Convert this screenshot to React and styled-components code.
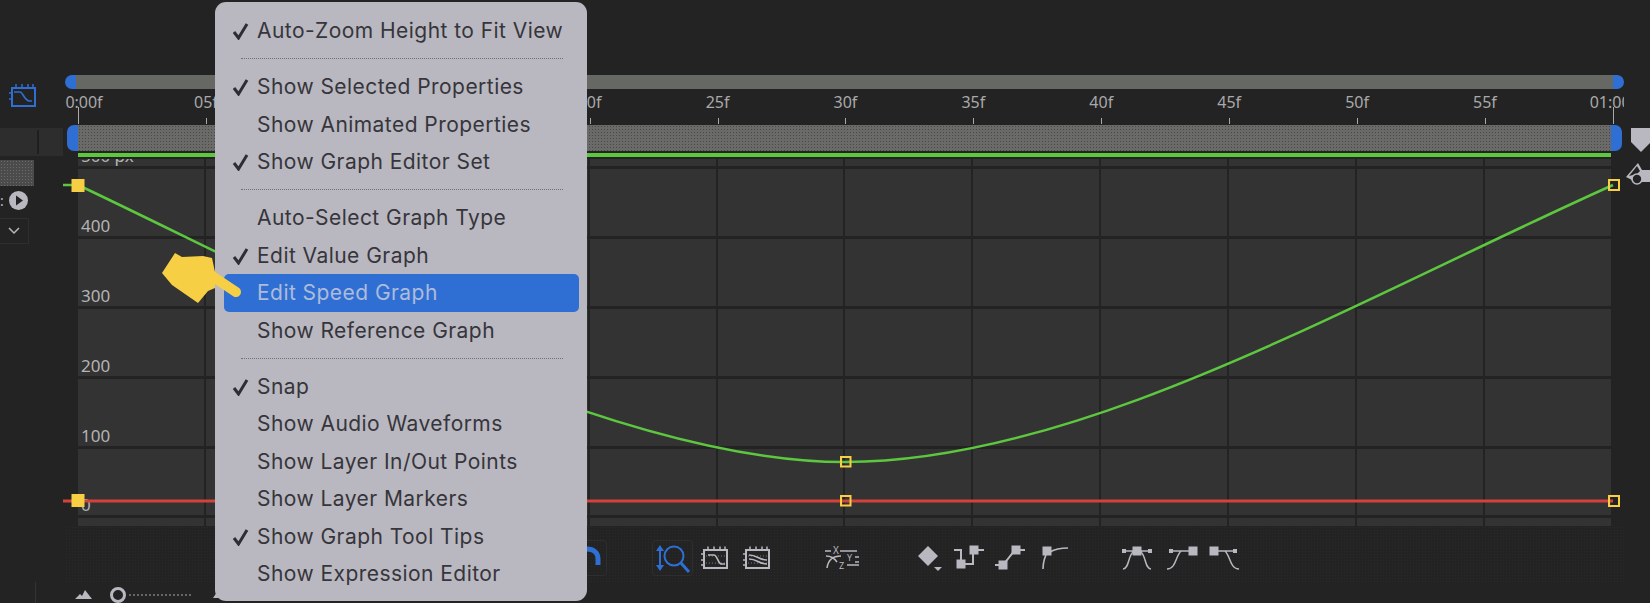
import React from 'react'
import styled, { createGlobalStyle } from 'styled-components'

const GlobalStyle = createGlobalStyle`
html, body {
    margin: 0;
    padding: 0;
    background-color: #232323;
}
`

const grey = '#b9b8c0'
const blue = '#2f6fd4'

const Page = styled.div`
position: relative;
width: 1650px;
height: 603px;
overflow: hidden;
background-color: #232323;
font-family: 'Noto Sans', sans-serif;
`
const Main = styled.div`
display: flex;
height: 582px;
`
const LeftPanel = styled.div`
flex: 0 0 65px;
display: flex;
flex-direction: column;
align-items: flex-start;
padding-top: 83px;
box-sizing: border-box;
`
const PanelIcon = styled.svg`
margin-left: 9px;
margin-bottom: 19px;
`
const LayerStrip = styled.div`
width: 63px;
height: 28px;
background-color: #2d2d2d;
background-image: linear-gradient(#1f1f1f, #1f1f1f);
background-size: 2px 24px;
background-position: 37px 2px;
background-repeat: no-repeat;
`
const NoisyBlock = styled.div`
width: 34px;
height: 26px;
margin-top: 4px;
background-color: #4b4b4b;
background-image: radial-gradient(#6b6b6b 0.7px, transparent 0.8px);
background-size: 3px 3px;
`
const PlayRow = styled.div`
display: flex;
align-items: center;
gap: 5px;
margin-top: 5px;
color: ${grey};
font-size: 14px;
line-height: 19px;
height: 19px;
`
const Dropdown = styled.div`
width: 29px;
height: 26px;
margin-top: 8px;
border: 1px solid #2e2e2e;
border-left: none;
box-sizing: border-box;
display: flex;
align-items: center;
justify-content: center;
`
const Center = styled.div`
flex: 0 0 1559px;
min-width: 0;
display: flex;
flex-direction: column;
`
const ScrollRow = styled.div`
display: flex;
height: 14px;
margin-top: 75px;
`
const Handle = styled.div`
flex: 0 0 11px;
background-color: ${blue};
border-radius: ${p => (p.$right ? '0 7px 7px 0' : '7px 0 0 7px')};
`
const ScrollTrack = styled.div`
flex: 1;
background-color: #666864;
`
const Ruler = styled.div`
display: flex;
height: 36px;
padding-left: 13px;
overflow: hidden;
`
const RulerMark = styled.div`
position: relative;
flex: 0 0 127.92px;
`
const RulerLabel = styled.span`
position: absolute;
top: 3px;
left: ${p => p.$shift}px;
transform: translateX(-50%);
font-size: 16px;
line-height: 20px;
color: #a9a9a9;
white-space: nowrap;
`
const RulerTick = styled.i`
position: absolute;
left: 0;
bottom: 1px;
width: 1px;
height: ${p => (p.$major ? 17 : 6)}px;
background-color: #a9a9a9;
`
const NavRow = styled.div`
display: flex;
height: 26px;
margin-left: 2px;
width: 1555px;
`
const NavTrack = styled.div`
flex: 1;
background-color: #6a6a68;
background-image: radial-gradient(#484848 0.7px, transparent 0.8px);
background-size: 3px 3px;
`
const GreenBar = styled.div`
height: 4px;
width: 1533px;
margin: 2px 0 2px 13px;
background-color: #5cc73f;
`
const GraphGrid = styled.div`
display: grid;
width: 1533px;
height: 367px;
margin-left: 13px;
grid-template-columns: repeat(12, 1fr);
grid-template-rows: 7px repeat(4, 67px) 66px 8px;
column-gap: 2px;
row-gap: 3px;
`
const Cell = styled.div`
background-color: #333333;
overflow: hidden;
display: flex;
align-items: flex-end;
padding-left: 3px;
font-size: 17px;
line-height: 20px;
color: #b4b4b4;
white-space: nowrap;
`
const Toolbar = styled.div`
flex: 1;
display: flex;
align-items: center;
padding: 8px 0 0 510px;
background-image: radial-gradient(#2a2a2a 0.6px, transparent 0.7px);
background-size: 3px 3px;
`
const ToolButton = styled.div`
display: flex;
align-items: center;
justify-content: center;
flex: 0 0 auto;
margin-left: ${p => p.$ml || 0}px;
width: ${p => p.$w}px;
height: 36px;
border-radius: 4px;
border: ${p => (p.$boxed ? '1px solid #2e2e2e' : 'none')};
box-sizing: border-box;
`
const Rail = styled.div`
flex: 0 0 26px;
display: flex;
flex-direction: column;
padding: 128px 0 0 2px;
box-sizing: border-box;
gap: 11px;
overflow: hidden;
`
const ShieldIcon = styled.svg`
margin-left: 5px;
`
const Footer = styled.div`
display: flex;
align-items: center;
height: 21px;
margin-left: 35px;
padding: 4px 0 0 39px;
box-sizing: border-box;
border-left: 1px solid #333;
`
const SliderKnob = styled.svg`
margin-left: 17px;
`
const SliderTrack = styled.div`
width: 62px;
margin-left: 2px;
border-top: 2px dotted #666;
`
const FooterMark = styled.svg`
margin-left: 22px;
`
const Overlay = styled.svg`
position: absolute;
top: 0;
left: 0;
pointer-events: none;
`
const Menu = styled.div`
position: absolute;
top: 2px;
left: 215px;
width: 372px;
height: 599px;
padding-top: 10px;
box-sizing: border-box;
border-radius: 11px;
background-color: ${grey};
font-family: 'Inter', sans-serif;
`
const MenuItem = styled.div`
position: relative;
display: flex;
align-items: center;
height: 37.5px;
margin: 0 8px 0 9px;
padding-left: 33px;
border-radius: 5px;
font-size: 21px;
letter-spacing: 0.45px;
white-space: nowrap;
color: ${p => (p.$active ? '#aebbd9' : '#36353b')};
background-color: ${p => (p.$active ? blue : 'transparent')};
`
const Check = styled.svg`
position: absolute;
left: 8px;
top: 10px;
`
const MenuRule = styled.div`
height: 18.5px;
display: flex;
align-items: center;
padding: 0 24px 0 26px;
&::after {
    content: '';
    flex: 1;
    border-top: 1px dotted #6f6f75;
}
`
const Hand = styled.svg`
position: absolute;
left: 160px;
top: 252px;
`

const frames = ['0:00f', '05f', '10f', '15f', '20f', '25f', '30f', '35f', '40f', '45f', '50f', '55f', '01:00f']
const rowLabels = ['500 px', '400', '300', '200', '100', '0', '']

const menuGroups = [
    [{ text: 'Auto-Zoom Height to Fit View', on: true }],
    [
        { text: 'Show Selected Properties', on: true },
        { text: 'Show Animated Properties' },
        { text: 'Show Graph Editor Set', on: true },
    ],
    [
        { text: 'Auto-Select Graph Type' },
        { text: 'Edit Value Graph', on: true },
        { text: 'Edit Speed Graph', active: true },
        { text: 'Show Reference Graph' },
    ],
    [
        { text: 'Snap', on: true },
        { text: 'Show Audio Waveforms' },
        { text: 'Show Layer In/Out Points' },
        { text: 'Show Layer Markers' },
        { text: 'Show Graph Tool Tips', on: true },
        { text: 'Show Expression Editor' },
    ],
]

function GraphGlyph({ color, w = 28, children }) {
    return (
        <svg width={w} height="26" viewBox="0 0 28 26" fill="none" stroke={color}>
            <rect x="3" y="5" width="23" height="18" strokeWidth="2" />
            <path d="M7 1.5v3M13 1.5v3M19 1.5v3M24 1.5v3M0 9h3M0 15h3M0 20h3" strokeWidth="1.5" />
            <path d="M5 11h20M5 18h20" strokeWidth="1" strokeDasharray="1 2" opacity="0.6" />
            {children}
        </svg>
    )
}

function Square({ x, y, w = 10 }) {
    return <rect x={x - w / 2} y={y - w / 2} width={w} height={w} fill={grey} stroke="none" />
}

function StepIcon() {
    return (
        <svg width="30" height="26" viewBox="0 0 30 26" fill="none" stroke={grey} strokeWidth="2">
            <path d="M0 5h7v14M7 19h12V5h11" />
            <Square x={7} y={19} w={9} />
            <Square x={20} y={5} w={9} />
        </svg>
    )
}

function LinearIcon() {
    return (
        <svg width="30" height="26" viewBox="0 0 30 26" fill="none" stroke={grey} strokeWidth="2">
            <path d="M0 20h8l12-15h10" />
            <Square x={8} y={20} w={9} />
            <Square x={21} y={5} w={9} />
        </svg>
    )
}

function CornerIcon() {
    return (
        <svg width="30" height="26" viewBox="0 0 30 26" fill="none" stroke={grey} strokeWidth="1.6">
            <path d="M2 24c0-7 2-13 5-18M9 7c5-3 10-4 18-4" />
            <Square x={6} y={6} w={9} />
        </svg>
    )
}

export default function App() {
    return (
        <Page>
            <GlobalStyle />
            <Main>
                <LeftPanel>
                    <PanelIcon width="28" height="26" viewBox="0 0 28 26" fill="none" stroke={blue}>
                        <rect x="3" y="5" width="23" height="18" strokeWidth="2" />
                        <path d="M7 1v3M13 1v3M19 1v3M24 1v3M0 10h3M0 16h3" strokeWidth="1.5" />
                        <path d="M5 9h6c3 0 4 8 9 9h3" strokeWidth="1.6" />
                    </PanelIcon>
                    <LayerStrip />
                    <NoisyBlock />
                    <PlayRow>
                        <span>:</span>
                        <svg width="19" height="19" viewBox="0 0 19 19">
                            <circle cx="9.5" cy="9.5" r="9.5" fill={grey} />
                            <path d="M7 4.5l7 5-7 5z" fill="#232323" />
                        </svg>
                    </PlayRow>
                    <Dropdown>
                        <svg width="12" height="8" viewBox="0 0 12 8" fill="none" stroke={grey} strokeWidth="1.5">
                            <path d="M1 1l5 5 5-5" />
                        </svg>
                    </Dropdown>
                </LeftPanel>

                <Center>
                    <ScrollRow>
                        <Handle />
                        <ScrollTrack />
                        <Handle $right />
                    </ScrollRow>
                    <Ruler>
                        {frames.map((f, i) => (
                            <RulerMark key={f}>
                                <RulerLabel $shift={i === 0 ? 6 : 0}>{f}</RulerLabel>
                                <RulerTick $major={i === 0 || i === 12} />
                            </RulerMark>
                        ))}
                    </Ruler>
                    <NavRow>
                        <Handle />
                        <NavTrack />
                        <Handle $right />
                    </NavRow>
                    <GreenBar />
                    <GraphGrid>
                        {rowLabels.map(label =>
                            frames.slice(1).map((f, c) => (
                                <Cell key={label + f}>{c === 0 ? label : ''}</Cell>
                            ))
                        )}
                    </GraphGrid>
                    <Toolbar>
                        <ToolButton $w={32} $boxed>
                            <svg width="30" height="26" viewBox="0 0 30 26" fill="none" stroke={blue} strokeWidth="5">
                                <path d="M11 4c7 0 11 4 11 10v6" />
                            </svg>
                        </ToolButton>
                        <ToolButton $w={41} $ml={45} $boxed>
                            <svg width="37" height="32" viewBox="0 0 37 32" fill="none" stroke={blue} strokeWidth="2">
                                <path d="M6 6v20" />
                                <path d="M2 9l4-6 4 6zM2 23l4 6 4-6z" fill={blue} stroke="none" />
                                <circle cx="20" cy="14" r="9.5" />
                                <path d="M27 21l8 9" strokeWidth="3" />
                            </svg>
                        </ToolButton>
                        <ToolButton $w={30} $ml={7}>
                            <GraphGlyph color={grey}>
                                <path d="M7 10h6c3 0 4 8 7 9h4" strokeWidth="1.6" />
                            </GraphGlyph>
                        </ToolButton>
                        <ToolButton $w={30} $ml={12}>
                            <GraphGlyph color={grey}>
                                <path d="M6 10c8 0 10 5 18 5M6 14c8 0 10 5 18 5" strokeWidth="1.6" />
                            </GraphGlyph>
                        </ToolButton>
                        <ToolButton $w={35} $ml={53}>
                            <svg width="35" height="28" viewBox="0 0 35 28" fill="none" stroke={grey} strokeWidth="1.5">
                                <text x="8" y="10" fontSize="10" fill={grey} stroke="none" fontFamily="Noto Sans">X</text>
                                <text x="22" y="17" fontSize="9" fill={grey} stroke="none" fontFamily="Noto Sans">Y</text>
                                <text x="14" y="25" fontSize="9" fill={grey} stroke="none" fontFamily="Noto Sans">Z</text>
                                <path d="M0 7h6M15 7h17M30 13h4M30 18h4M22 21h12M2 24c1-8 6-12 14-12M1 12c5 0 9 3 11 6" />
                            </svg>
                        </ToolButton>
                        <ToolButton $w={27} $ml={57}>
                            <svg width="27" height="28" viewBox="0 0 27 28">
                                <path d="M11 2l10 10-10 10L1 12z" fill={grey} />
                                <path d="M17 23h8l-4 4z" fill={grey} />
                            </svg>
                        </ToolButton>
                        <ToolButton $w={30} $ml={10}><StepIcon /></ToolButton>
                        <ToolButton $w={30} $ml={11}><LinearIcon /></ToolButton>
                        <ToolButton $w={30} $ml={16}><CornerIcon /></ToolButton>
                        <ToolButton $w={30} $ml={51}>
                            <svg width="30" height="26" viewBox="0 0 30 26" fill="none" stroke={grey} strokeWidth="1.5">
                                <path d="M1 6h28M1 24c6 0 5-13 10-17M29 24c-6 0-5-13-10-17" />
                                <Square x={15} y={6} w={9} />
                                <Square x={2} y={6} w={4} />
                                <Square x={28} y={6} w={4} />
                            </svg>
                        </ToolButton>
                        <ToolButton $w={32} $ml={15}>
                            <svg width="32" height="26" viewBox="0 0 32 26" fill="none" stroke={grey} strokeWidth="1.5">
                                <path d="M3 6h24M0 24c9 0 8-12 14-18" />
                                <Square x={4} y={6} w={4} />
                                <Square x={26} y={6} w={9} />
                            </svg>
                        </ToolButton>
                        <ToolButton $w={30} $ml={10}>
                            <svg width="30" height="26" viewBox="0 0 30 26" fill="none" stroke={grey} strokeWidth="1.5">
                                <path d="M3 6h24M30 24c-9 0-8-12-14-18" />
                                <Square x={5} y={6} w={9} />
                                <Square x={26} y={6} w={4} />
                            </svg>
                        </ToolButton>
                    </Toolbar>
                </Center>

                <Rail>
                    <ShieldIcon width="20" height="24" viewBox="0 0 20 24">
                        <path d="M0 0h20v14l-10 10-10-10z" fill={grey} />
                    </ShieldIcon>
                    <svg width="24" height="24" viewBox="0 0 24 24">
                        <path d="M0 14L12 0l4 7h8v12H10z" fill={grey} />
                        <path d="M3 13l8-10 3 5-3 3z" fill="#232323" />
                        <circle cx="11" cy="16" r="5" fill="#232323" stroke={grey} strokeWidth="1.6" />
                    </svg>
                </Rail>
            </Main>

            <Footer>
                <svg width="17" height="9" viewBox="0 0 17 9">
                    <path d="M0 9l5-5 2 2 3-6 7 9z" fill={grey} />
                </svg>
                <SliderKnob width="18" height="18" viewBox="0 0 18 18" fill="none" stroke={grey} strokeWidth="3">
                    <circle cx="9" cy="9" r="6.5" />
                </SliderKnob>
                <SliderTrack />
                <FooterMark width="8" height="6" viewBox="0 0 8 6">
                    <path d="M0 6l4-6 4 6z" fill={grey} />
                </FooterMark>
            </Footer>

            <Overlay width="1650" height="603" viewBox="0 0 1650 603" fill="none">
                <path d="M63 185H78C290 285 610 462 845 462C1080 462 1350 303 1613 185" stroke="#5cc73f" strokeWidth="2.5" />
                <path d="M63 501H1613" stroke="#d4423a" strokeWidth="3" />
                <rect x="71.5" y="179" width="13" height="13" fill="#f7cf45" />
                <rect x="71.5" y="494" width="13" height="13" fill="#f7cf45" />
                <rect x="841" y="457" width="9.5" height="9.5" stroke="#f7cf45" strokeWidth="2" />
                <rect x="841" y="496" width="9.5" height="9.5" stroke="#f7cf45" strokeWidth="2" />
                <rect x="1609" y="180" width="10" height="10" stroke="#f7cf45" strokeWidth="2" />
                <rect x="1609" y="496" width="10" height="10" stroke="#f7cf45" strokeWidth="2" />
            </Overlay>

            <Menu>
                {menuGroups.map((group, g) => (
                    <React.Fragment key={g}>
                        {g > 0 && <MenuRule />}
                        {group.map(item => (
                            <MenuItem key={item.text} $active={item.active}>
                                {item.on && (
                                    <Check width="17" height="18" viewBox="0 0 17 18" fill="none" stroke="#2e2d33" strokeWidth="3">
                                        <path d="M2 10l4.5 6L15 2" />
                                    </Check>
                                )}
                                {item.text}
                            </MenuItem>
                        ))}
                    </React.Fragment>
                ))}
            </Menu>

            <Hand width="84" height="56" viewBox="0 0 84 56">
                <path d="M15 1L2 21l10 12 26 18 10-12 7-3 0-16-3-14-9-2-21 1z" fill="#f7cf45" />
                <path d="M52 24l24 16" stroke="#f7cf45" strokeWidth="10" strokeLinecap="round" />
            </Hand>
        </Page>
    )
}
